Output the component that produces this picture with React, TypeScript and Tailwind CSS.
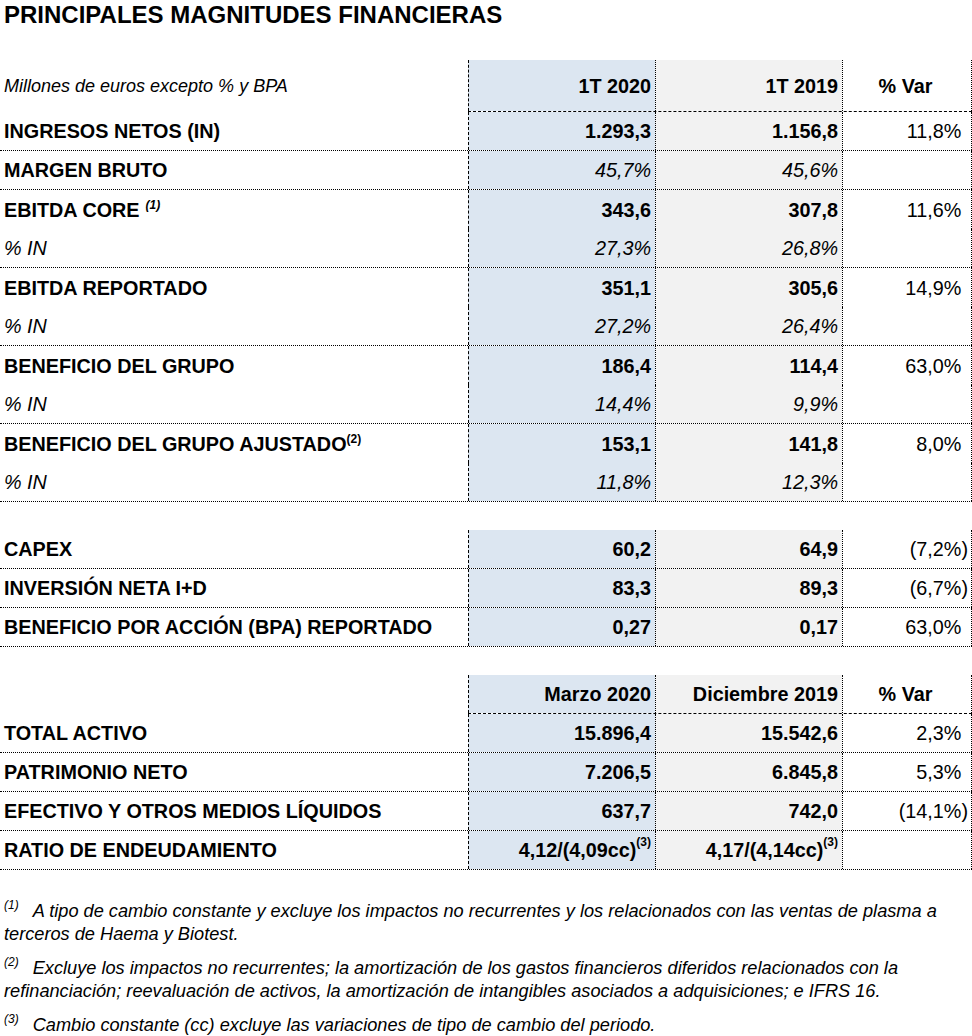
import React from "react";

type Line = {
  label?: React.ReactNode;
  a?: React.ReactNode;
  b?: React.ReactNode;
  v?: string;
  sub?: boolean; // italic figures
  plain?: boolean; // italic, regular label
};

const Sup = ({ children, italic = false }: { children: React.ReactNode; italic?: boolean }) => (
  <sup className={`text-[12px] relative -top-[8px] ${italic ? "italic" : ""}`}>{children}</sup>
);

const SECTION_1: Line[][] = [
  [{ label: "INGRESOS NETOS (IN)", a: "1.293,3", b: "1.156,8", v: "11,8%" }],
  [{ label: "MARGEN BRUTO", a: "45,7%", b: "45,6%", sub: true }],
  [
    { label: <>EBITDA CORE<span className="ml-[6px]"><Sup italic>(1)</Sup></span></>, a: "343,6", b: "307,8", v: "11,6%" },
    { label: "% IN", a: "27,3%", b: "26,8%", sub: true, plain: true },
  ],
  [
    { label: "EBITDA REPORTADO", a: "351,1", b: "305,6", v: "14,9%" },
    { label: "% IN", a: "27,2%", b: "26,4%", sub: true, plain: true },
  ],
  [
    { label: "BENEFICIO DEL GRUPO", a: "186,4", b: "114,4", v: "63,0%" },
    { label: "% IN", a: "14,4%", b: "9,9%", sub: true, plain: true },
  ],
  [
    { label: <>BENEFICIO DEL GRUPO AJUSTADO<Sup>(2)</Sup></>, a: "153,1", b: "141,8", v: "8,0%" },
    { label: "% IN", a: "11,8%", b: "12,3%", sub: true, plain: true },
  ],
];

const SECTION_2: Line[][] = [
  [{ label: "CAPEX", a: "60,2", b: "64,9", v: "(7,2%)" }],
  [{ label: "INVERSIÓN NETA I+D", a: "83,3", b: "89,3", v: "(6,7%)" }],
  [{ label: "BENEFICIO POR ACCIÓN (BPA) REPORTADO", a: "0,27", b: "0,17", v: "63,0%" }],
];

const SECTION_3: Line[][] = [
  [{ label: "TOTAL ACTIVO", a: "15.896,4", b: "15.542,6", v: "2,3%" }],
  [{ label: "PATRIMONIO NETO", a: "7.206,5", b: "6.845,8", v: "5,3%" }],
  [{ label: "EFECTIVO Y OTROS MEDIOS LÍQUIDOS", a: "637,7", b: "742,0", v: "(14,1%)" }],
  [
    {
      label: "RATIO DE ENDEUDAMIENTO",
      a: <>4,12/(4,09cc)<Sup>(3)</Sup></>,
      b: <>4,17/(4,14cc)<Sup>(3)</Sup></>,
    },
  ],
];

function Var({ v }: { v?: string })
{
  if (!v) return null;
  const neg = v.startsWith("(");
  return (
    <span>
      {v}
      {!neg && <span className="invisible">)</span>}
    </span>
  );
}

function DataCells({ a, b, v, sub, header }: { a?: React.ReactNode; b?: React.ReactNode; v?: React.ReactNode; sub?: boolean; header?: boolean })
{
  const txt = sub ? "italic" : "font-bold";
  return (
    <>
      <div className={`w-[187px] h-full bg-[#dce6f1] border-l border-dashed border-black flex items-center justify-end pr-1 ${txt}`}>
        {a}
      </div>
      <div className={`w-[187px] h-full bg-[#f2f2f2] border-l border-dotted border-black flex items-center justify-end pr-1 ${txt}`}>
        {b}
      </div>
      <div className={`w-[130px] h-full border-l border-r border-dotted border-black flex items-center pr-[3px] ${header ? "justify-center font-bold" : "justify-end"}`}>
        {v}
      </div>
    </>
  );
}

function HeaderRow({ label, a, b, tall }: { label?: React.ReactNode; a: string; b: string; tall?: boolean })
{
  return (
    <div className={`flex ${tall ? "h-[52px]" : "h-[39px]"}`}>
      <div className="w-[468px] h-full flex items-center pl-[4px] italic text-[18px]">{label}</div>
      <div className="flex h-full border-b border-dashed border-black">
        <DataCells a={a} b={b} v="% Var" header />
      </div>
    </div>
  );
}

function Section({ groups }: { groups: Line[][] })
{
  return (
    <div>
      {groups.map((group, gi) =>
        group.map((line, li) => {
          const last = li === group.length - 1;
          return (
            <div
              key={`${gi}-${li}`}
              className={`flex h-[39px] ${last ? "border-b border-dotted border-black" : ""}`}
            >
              <div className={`w-[468px] h-full flex items-center pl-[4px] ${line.plain ? "italic" : "font-bold"}`}>
                <span>{line.label}</span>
              </div>
              <DataCells a={line.a} b={line.b} v={<Var v={line.v} />} sub={line.sub} />
            </div>
          );
        })
      )}
    </div>
  );
}

export default function App()
{
  return (
    <div className="w-[972px] bg-white text-black text-[19.8px] leading-[24px] font-['Liberation_Sans',Arial,sans-serif]">
      <div className="h-[60px] pl-[4px] pt-[1px] text-[24px] leading-[28px] font-bold">
        PRINCIPALES MAGNITUDES FINANCIERAS
      </div>

      <HeaderRow label="Millones de euros excepto % y BPA" a="1T 2020" b="1T 2019" tall />
      <Section groups={SECTION_1} />

      <div className="mt-[28px]">
        <Section groups={SECTION_2} />
      </div>

      <div className="mt-[28px]">
        <HeaderRow a="Marzo 2020" b="Diciembre 2019" />
        <Section groups={SECTION_3} />
      </div>

      <div className="mt-[30px] pl-[4px] text-[18.2px] leading-[23px] italic flex flex-col gap-[11px]">
        <p>
          <Sup>(1)</Sup>
          <span className="ml-[14px]">A tipo de cambio constante y excluye los impactos no recurrentes y los relacionados con las ventas de plasma a</span>
          <br />
          terceros de Haema y Biotest.
        </p>
        <p>
          <Sup>(2)</Sup>
          <span className="ml-[14px]">Excluye los impactos no recurrentes; la amortización de los gastos financieros diferidos relacionados con la</span>
          <br />
          refinanciación; reevaluación de activos, la amortización de intangibles asociados a adquisiciones; e IFRS 16.
        </p>
        <p>
          <Sup>(3)</Sup>
          <span className="ml-[14px]">Cambio constante (cc) excluye las variaciones de tipo de cambio del periodo.</span>
        </p>
      </div>
    </div>
  );
}
